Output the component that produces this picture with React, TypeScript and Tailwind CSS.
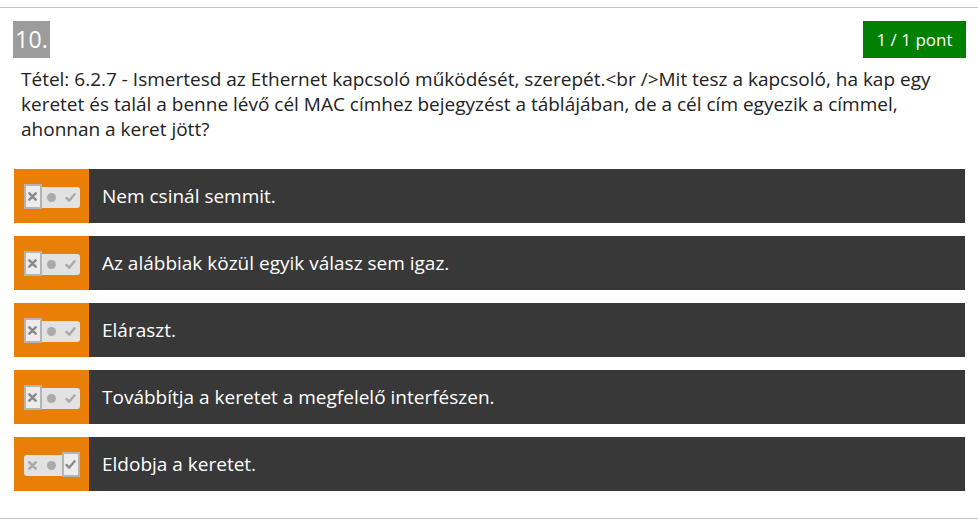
import React from "react";

const answers = [
  { text: "Nem csinál semmit.", state: "x" },
  { text: "Az alábbiak közül egyik válasz sem igaz.", state: "x" },
  { text: "Eláraszt.", state: "x" },
  { text: "Továbbítja a keretet a megfelelő interfészen.", state: "x" },
  { text: "Eldobja a keretet.", state: "ok" },
];

const Cross = () => (
  <svg width="9" height="9" viewBox="0 0 10 10">
    <path d="M1.5 1.5l7 7M8.5 1.5l-7 7" stroke="currentColor" strokeWidth="2.8" strokeLinecap="round" />
  </svg>
);

const Check = () => (
  <svg width="11" height="9" viewBox="0 0 12 10">
    <path d="M1.5 5.5l3 3 6-7" fill="none" stroke="currentColor" strokeWidth="2.6" strokeLinecap="round" strokeLinejoin="round" />
  </svg>
);

const Toggle = ({ state }: { state: string }) => (
  <div className="relative w-[56px] h-[25px]">
    <div className="absolute left-0 right-0 top-[3px] h-[21px] rounded-[3px] bg-[#e2e2e2] flex items-center">
      <span className="w-[18px] flex justify-center text-[#a8a8a8]">
        <Cross />
      </span>
      <span className="w-[20px] flex justify-center">
        <span className="w-[9px] h-[9px] rounded-full bg-[#aaaaaa]" />
      </span>
      <span className="w-[18px] flex justify-center text-[#a8a8a8]">
        <Check />
      </span>
    </div>
    <span
      className={
        state === "ok"
          ? "absolute right-0 top-0 w-[18px] h-[25px] border-2 border-[#b4b4b4] bg-[#ececec] flex items-center justify-center text-[#8a8a8a]"
          : "absolute left-0 top-0 w-[18px] h-[25px] border-2 border-[#b4b4b4] bg-[#ececec] flex items-center justify-center text-[#8a8a8a]"
      }
    >
      {state === "ok" ? <Check /> : <Cross />}
    </span>
  </div>
);

export default function App() {
  return (
    <div className="w-[978px] h-[525px] bg-white font-['Open_Sans',sans-serif] pt-[7px]">
      <div className="border-t border-b border-[#c4c4c4] h-[512px] pt-[13px] pl-[13px] pr-[12px]">
        <div className="flex justify-between items-start">
          <div className="w-[37px] h-[37px] bg-[#9c9c9c] text-white text-[23px] leading-[37px] text-center">
            10.
          </div>
          <div className="w-[103px] h-[37px] bg-[#008000] text-white text-[17px] leading-[37px] text-center">
            1 / 1 pont
          </div>
        </div>
        <p className="mt-[9px] pl-[8px] whitespace-nowrap text-[19px] leading-[25px] text-[#222]">
          Tétel: 6.2.7 - Ismertesd az Ethernet kapcsoló működését, szerepét.&lt;br /&gt;Mit tesz a kapcsoló, ha kap egy
          <br />
          keretet és talál a benne lévő cél MAC címhez bejegyzést a táblájában, de a cél cím egyezik a címmel,
          <br />
          ahonnan a keret jött?
        </p>
        <div className="mt-[27px] pl-[1px] flex flex-col gap-[13px]">
          {answers.map((a) => (
            <div key={a.text} className="flex h-[54px] w-[951px] bg-[#383838]">
              <div className="w-[75px] bg-[#ea7f07] flex items-center justify-center">
                <Toggle state={a.state} />
              </div>
              <div className="flex items-center pl-[13px] text-white text-[19px]">{a.text}</div>
            </div>
          ))}
        </div>
      </div>
    </div>
  );
}
